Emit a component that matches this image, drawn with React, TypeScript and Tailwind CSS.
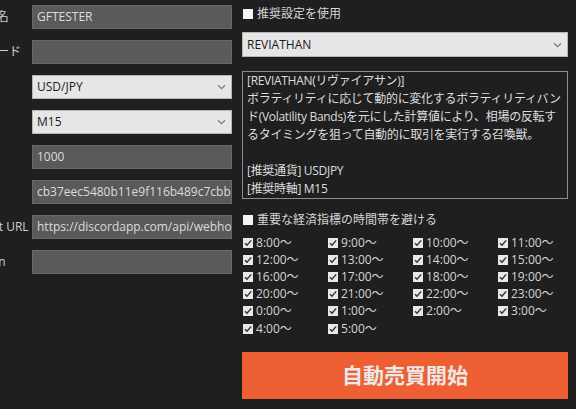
import React from 'react'

const font = { fontFamily: '"Open Sans", "Noto Sans CJK JP", sans-serif' }

const fields = [
  { label: 'ユーザー名', value: 'GFTESTER', kind: 'input' },
  { label: '認証用コード', value: '', kind: 'input' },
  { label: '通貨', value: 'USD/JPY', kind: 'select' },
  { label: '時間足', value: 'M15', kind: 'select' },
  { label: 'ロット', value: '1000', kind: 'input' },
  { label: 'キー', value: 'cb37eec5480b11e9f116b489c7cbb', kind: 'input' },
  { label: 'Alert Post URL', value: 'https://discordapp.com/api/webhooks', kind: 'input' },
  { label: 'Bot Token', value: '', kind: 'input' },
]

const hours = [8, 9, 10, 11, 12, 13, 14, 15, 16, 17, 18, 19, 20, 21, 22, 23, 0, 1, 2, 3, 4, 5]

function Chevron() {
  return (
    <svg width="9" height="6" viewBox="0 0 9 6" className="shrink-0">
      <path d="M1 1.2 L4.5 4.6 L8 1.2" fill="none" stroke="#7a7a7a" strokeWidth="1.2" />
    </svg>
  )
}

function Box({ checked }: { checked?: boolean }) {
  return (
    <svg width="10" height="10" viewBox="0 0 10 10" className="shrink-0">
      <rect x="0" y="0" width="10" height="10" fill={checked ? '#e8e8e8' : '#f4f4f4'} />
      {checked && <path d="M2 5.2 L4 7.3 L8.2 2.4" fill="none" stroke="#333" strokeWidth="1.4" />}
    </svg>
  )
}

export default function App() {
  return (
    <div className="w-[576px] h-[409px] bg-[#1f1f1f] overflow-hidden text-[12px] text-[#d6d6d6]" style={font}>
      <div className="flex ml-[-51px]">
        {/* left form */}
        <div className="flex flex-col gap-[11px] pt-[5px]">
          {fields.map((f) => (
            <div key={f.label} className="flex items-center h-[24px]">
              <div className="w-[83px] whitespace-nowrap overflow-hidden text-[#cfcfcf]">{f.label}</div>
              {f.kind === 'input' ? (
                <div className="w-[200px] h-[24px] bg-[#5a5a5a] border border-[#686868] px-[4px] flex items-center overflow-hidden whitespace-nowrap text-[#dcdcdc]">
                  {f.value}
                </div>
              ) : (
                <div className="w-[200px] h-[24px] bg-[#e6e6e6] border border-[#b5b5b5] pl-[4px] pr-[5px] flex items-center justify-between text-[#1a1a1a]">
                  <span>{f.value}</span>
                  <Chevron />
                </div>
              )}
            </div>
          ))}
        </div>

        {/* right panel */}
        <div className="ml-[10px] w-[326px] flex flex-col">
          <div className="mt-[4px] h-[20px] flex items-center gap-[4px] pl-[1px]">
            <Box />
            <span>推奨設定を使用</span>
          </div>
          <div className="mt-[8px] h-[25px] bg-[#e6e6e6] border border-[#b5b5b5] pl-[4px] pr-[5px] flex items-center justify-between text-[#1a1a1a]">
            <span>REVIATHAN</span>
            <Chevron />
          </div>
          <div className="mt-[14px] h-[128px] border border-[#8c8c8c] px-[4px] leading-[18px] whitespace-nowrap overflow-hidden tracking-[-0.3px] text-[#dedede]">
            <div>[REVIATHAN(リヴァイアサン)]</div>
            <div>ボラティリティに応じて動的に変化するボラティリティバン</div>
            <div>ド(Volatility Bands)を元にした計算値により、相場の反転す</div>
            <div>るタイミングを狙って自動的に取引を実行する召喚獣。</div>
            <div>&nbsp;</div>
            <div>[推奨通貨] USDJPY</div>
            <div>[推奨時軸] M15</div>
          </div>
          <div className="mt-[11px] h-[20px] flex items-center gap-[4px] pl-[1px]">
            <Box />
            <span>重要な経済指標の時間帯を避ける</span>
          </div>
          <div className="mt-[4px] grid grid-cols-[85px_85px_85px_85px] pl-[1px]">
            {hours.map((h) => (
              <div key={h} className="h-[17.2px] flex items-center gap-[3px]">
                <Box checked />
                <span>{h}:00～</span>
              </div>
            ))}
          </div>
          <button className="mt-[15px] h-[47px] bg-[#ee5f33] text-[#e9e9e9] text-[21px] font-bold flex items-center justify-center">
            自動売買開始
          </button>
        </div>
      </div>
    </div>
  )
}
